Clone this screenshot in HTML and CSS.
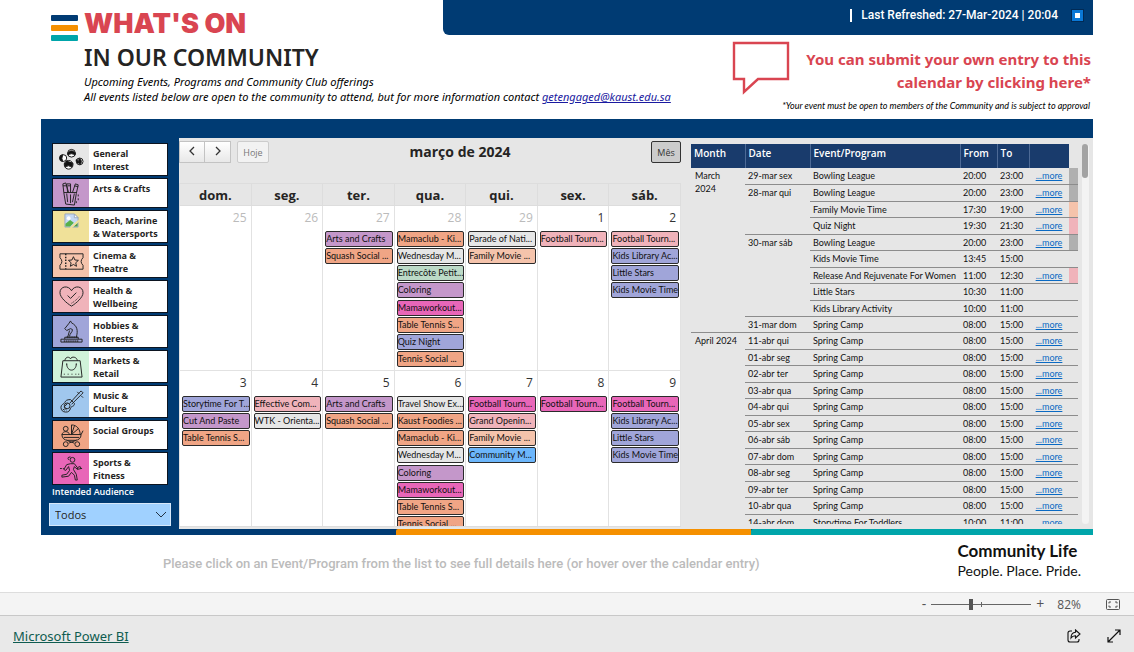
FILE: index.html
```html
<!DOCTYPE html>
<html lang="en">
<head>
<meta charset="utf-8">
<title>What's on in our community</title>
<link rel="stylesheet" href="styles.css">
</head>
<body>
<div class="report">
  <header>
    <div class="top-row">
      <div class="brand">
        <span class="stripes"><i class="navy"></i><i class="orange"></i><i class="teal"></i></span>
        <h1>WHAT'S ON</h1>
      </div>
      <div class="banner">
        <span class="refreshed">Last Refreshed: 27-Mar-2024 | 20:04</span>
        <button class="square" aria-label="Refresh status"></button>
      </div>
    </div>
    <div class="intro-row">
      <div class="intro">
        <h2>IN OUR COMMUNITY</h2>
        <p>Upcoming Events, Programs and Community Club offerings</p>
        <p>All events listed below are open to the community to attend, but for more information contact <a href="#">getengaged@kaust.edu.sa</a></p>
      </div>
      <div class="submit">
        <div class="submit-main">
          <svg class="bubble" viewBox="0 0 58 54" width="58" height="54"><path d="M2 2H56V38H26L12 51V38H2Z" fill="#fff" stroke="#d94551" stroke-width="2.4"/></svg>
          <a href="#">You can submit your own entry to this calendar by clicking here*</a>
        </div>
        <p>*Your event must be open to members of the Community and is subject to approval</p>
      </div>
    </div>
  </header>

  <main>
    <aside>
      <ul class="filters">
        <li><button><span class="ic gray"><svg viewBox="0 0 26 26"><g stroke="#111" fill="#fff"><circle cx="13" cy="6.500" r="4"/><circle cx="4.500" cy="11.500" r="3.500"/><circle cx="21.500" cy="15" r="3.500"/><circle cx="10" cy="18.500" r="4.500"/></g><path d="M9 6q4-4 8 0v2q-4-2-8 0zM4 8a3.500 3.500 0 0 0 0 7q-2-3 0-7zM21 12q4 2 1 6.500-3-2-1-6.500zM5.500 17q4-3 9 0l-1 4q-4-3-7 0z" fill="#111"/><path d="M18 13l2 4M7 15l6 2" stroke="#111" stroke-width="2"/></svg></span><b>General<br>Interest</b></button></li>
        <li class="one"><button><span class="ic purple"><svg viewBox="0 0 26 26"><path d="M5 12l2 12 9 1 2-12M5 12l-1-9 3-1 3 10M9 12l-1-9h4v9M14 12l3-9 3 1-2 9M5 12h13M8 13l1 9M12 14v9M16 13l-2 9M4 5h4M9 5h3M16 5l4 1M20 14v2M20 18v2M18 21v2"/></svg></span><b>Arts &amp; Crafts</b></button></li>
        <li><button><span class="ic yellow broken"><svg viewBox="0 0 16 16"><path d="M1 1h10l4 4v10H1z" fill="#c5d9f5" stroke="#9aa9bd"/><path d="M11 1v4h4z" fill="#fff" stroke="#9aa9bd"/><circle cx="5" cy="5.500" r="2" fill="#fff" stroke="none"/><path d="M1.500 14.500v-3l5-4 4 3-4 4z" fill="#57b04a" stroke="none"/><path d="M10 14.500l4.500-4v4z" fill="#4d9b42" stroke="none"/><path d="M7 16l9-8" stroke="#f0e199" stroke-width="2"/></svg></span><b>Beach, Marine<br>&amp; Watersports</b></button></li>
        <li><button><span class="ic peach"><svg viewBox="0 0 26 26"><path d="M1 5h24v4q-4 4 0 8v4H1v-4q4-4 0-8z"/><path d="M7 5v16" stroke-dasharray="1.500 1.500" stroke-width="1.500"/><path d="M15 8l1.500 3.400 3.700.4-2.800 2.500.8 3.700-3.200-1.900-3.200 1.900.8-3.700-2.800-2.500 3.700-.4z"/></svg></span><b>Cinema &amp;<br>Theatre</b></button></li>
        <li><button><span class="ic pink"><svg viewBox="0 0 26 26"><path d="M13 23C8 20 1 14 1 9c0-7 9-8 12-2 3-6 12-5 12 2 0 5-7 11-12 14z"/><path d="M9 12l3 3 6-6"/><path d="M13 20q5-3 8-7" stroke-dasharray="1 1"/></svg></span><b>Health &amp;<br>Wellbeing</b></button></li>
        <li><button><span class="ic violet"><svg viewBox="0 0 26 26"><path d="M2 21h22v3H2zM6 21v-2h14v2M9 19l2-7M18 19c2-7 1-12-5-15l-1-2-2 3-4 5 2 2 4-2 2 1c0 3-3 4-3 7"/><path d="M5 23h16M8 19h11" stroke-width="2" stroke-dasharray="1 1"/></svg></span><b>Hobbies &amp;<br>Interests</b></button></li>
        <li><button><span class="ic mint"><svg viewBox="0 0 26 26"><path d="M4 7h18l2 17H2zM8 11v-1M18 11v-1M8 10c0 9 10 9 10 0M6 7c1-5 5-4 6-2 1-3 7-2 7 2M5 21h1M9 21h1M13 21h1M17 21h1M20 21h1"/></svg></span><b>Markets &amp;<br>Retail</b></button></li>
        <li><button><span class="ic sky"><svg viewBox="0 0 26 26"><path d="M12 11c-4 0-5 1-6 3s-4 2-4 5 2 5 5 5 4-1 5-4 4-1 4-5z"/><circle cx="8.500" cy="17.500" r="3"/><path d="M11 15L21 4M13 16L23 6M21 4l2-2 2 2-2 2M5 19l3 3M4 21l2 1M19 3l2 2M23 7l2 2M6 18l3-3"/></svg></span><b>Music &amp;<br>Culture</b></button></li>
        <li class="one"><button><span class="ic salmon"><svg viewBox="0 0 26 26"><path d="M3 12h20c0 4-3 6-6 6H9c-3 0-6-2-6-6zM13 12V2c6 0 9 5 9 10M13 12l3-9M13 12l7-6M23 12l2-4"/><circle cx="7" cy="6" r="2.500"/><path d="M3 12c1-4 7-4 8 0M8 18l8 3M18 18l-8 3M5 15h16"/><circle cx="7" cy="22" r="2.500"/><circle cx="19" cy="22" r="2.500"/></svg></span><b>Social Groups</b></button></li>
        <li><button><span class="ic magenta"><svg viewBox="0 0 26 26"><circle cx="14" cy="4" r="2.500"/><path d="M10 4q-2-3 2-3M12 8l-4 1-3 5 2 1 3-4 1 4-3 4-5 1v2l7-1 3-4 3 3 1 5h2l-1-6-3-5 1-3 3 3 4-1-1-2-3 1-3-4z"/><path d="M1 13h4M18 13h3M22 13h3" stroke-dasharray="2 1"/></svg></span><b>Sports &amp;<br>Fitness</b></button></li>
      </ul>
      <label for="aud">Intended Audience</label>
      <div class="select-wrap">
        <select id="aud"><option>Todos</option></select>
        <svg viewBox="0 0 12 8" width="12" height="8"><path d="M1 1l5 5 5-5" fill="none" stroke="#234" stroke-width="1"/></svg>
      </div>
    </aside>

    <div class="content">
      <section class="calendar">
        <div class="toolbar">
          <div class="nav">
            <button aria-label="Previous"><svg viewBox="0 0 8 10" width="8" height="10"><path d="M6 1L2 5l4 4"/></svg></button><button aria-label="Next"><svg viewBox="0 0 8 10" width="8" height="10"><path d="M2 1l4 4-4 4"/></svg></button>
          </div>
          <button class="today" disabled>Hoje</button>
          <h3>março de 2024</h3>
          <button class="month">Mês</button>
        </div>
        <div class="month-clip">
        <table class="cal">
          <thead><tr><th>dom.</th><th>seg.</th><th>ter.</th><th>qua.</th><th>qui.</th><th>sex.</th><th>sáb.</th></tr></thead>
          <tbody>
            <tr>
              <td class="off"><time>25</time></td>
              <td class="off"><time>26</time></td>
              <td class="off"><time>27</time><div class="ev purple">Arts and Crafts</div><div class="ev salmon">Squash Social ...</div></td>
              <td class="off"><time>28</time><div class="ev salmon">Mamaclub - Ki...</div><div class="ev gray">Wednesday M...</div><div class="ev green">Entrecôte Petit...</div><div class="ev purple">Coloring</div><div class="ev magenta">Mamaworkout...</div><div class="ev salmon">Table Tennis S...</div><div class="ev violet">Quiz Night</div><div class="ev salmon">Tennis Social ...</div></td>
              <td class="off"><time>29</time><div class="ev gray">Parade of Nati...</div><div class="ev peach">Family Movie ...</div></td>
              <td><time>1</time><div class="ev pink">Football Tourn...</div></td>
              <td><time>2</time><div class="ev pink">Football Tourn...</div><div class="ev violet">Kids Library Ac...</div><div class="ev violet">Little Stars</div><div class="ev violet">Kids Movie Time</div></td>
            </tr>
            <tr>
              <td><time>3</time><div class="ev violet">Storytime For T...</div><div class="ev purple">Cut And Paste</div><div class="ev salmon">Table Tennis S...</div></td>
              <td><time>4</time><div class="ev pink">Effective Com...</div><div class="ev gray">WTK - Orienta...</div></td>
              <td><time>5</time><div class="ev purple">Arts and Crafts</div><div class="ev salmon">Squash Social ...</div></td>
              <td><time>6</time><div class="ev gray">Travel Show Ex...</div><div class="ev salmon">Kaust Foodies ...</div><div class="ev salmon">Mamaclub - Ki...</div><div class="ev gray">Wednesday M...</div><div class="ev purple">Coloring</div><div class="ev magenta">Mamaworkout...</div><div class="ev salmon">Table Tennis S...</div><div class="ev salmon">Tennis Social ...</div></td>
              <td><time>7</time><div class="ev magenta">Football Tourn...</div><div class="ev pink">Grand Openin...</div><div class="ev peach">Family Movie ...</div><div class="ev blue">Community M...</div></td>
              <td><time>8</time><div class="ev magenta">Football Tourn...</div></td>
              <td><time>9</time><div class="ev magenta">Football Tourn...</div><div class="ev violet">Kids Library Ac...</div><div class="ev violet">Little Stars</div><div class="ev violet">Kids Movie Time</div></td>
            </tr>
          </tbody>
        </table>
        </div>
      </section>

      <section class="list">
        <div class="list-clip">
        <table class="events">
          <colgroup><col class="c-month"><col class="c-date"><col><col class="c-from"><col class="c-to"><col class="c-more"><col class="c-tag"></colgroup>
          <thead><tr><th>Month</th><th>Date</th><th>Event/Program</th><th>From</th><th>To</th><th></th><td></td></tr></thead>
          <tbody class="march">
            <tr><td rowspan="10" class="m">March 2024</td><td>29-mar sex</td><td>Bowling League</td><td>20:00</td><td>23:00</td><td><a href="#">...more</a></td><td class="t-gray"></td></tr>
            <tr><td rowspan="3">28-mar qui</td><td>Bowling League</td><td>20:00</td><td>23:00</td><td><a href="#">...more</a></td><td class="t-gray"></td></tr>
            <tr><td>Family Movie Time</td><td>17:30</td><td>19:00</td><td><a href="#">...more</a></td><td class="peach"></td></tr>
            <tr><td>Quiz Night</td><td>19:30</td><td>21:30</td><td><a href="#">...more</a></td><td class="pink"></td></tr>
            <tr><td rowspan="5">30-mar sáb</td><td>Bowling League</td><td>20:00</td><td>23:00</td><td><a href="#">...more</a></td><td class="t-gray"></td></tr>
            <tr><td>Kids Movie Time</td><td>13:45</td><td>15:00</td><td></td><td></td></tr>
            <tr><td>Release And Rejuvenate For Women</td><td>11:00</td><td>12:30</td><td><a href="#">...more</a></td><td class="pink"></td></tr>
            <tr><td>Little Stars</td><td>10:30</td><td>11:00</td><td></td><td></td></tr>
            <tr><td>Kids Library Activity</td><td>10:00</td><td>11:00</td><td></td><td></td></tr>
            <tr><td>31-mar dom</td><td>Spring Camp</td><td>08:00</td><td>15:00</td><td><a href="#">...more</a></td><td></td></tr>
          </tbody>
          <tbody class="april">
            <tr><td rowspan="12" class="m">April 2024</td><td>11-abr qui</td><td>Spring Camp</td><td>08:00</td><td>15:00</td><td><a href="#">...more</a></td><td></td></tr>
            <tr><td>01-abr seg</td><td>Spring Camp</td><td>08:00</td><td>15:00</td><td><a href="#">...more</a></td><td></td></tr>
            <tr><td>02-abr ter</td><td>Spring Camp</td><td>08:00</td><td>15:00</td><td><a href="#">...more</a></td><td></td></tr>
            <tr><td>03-abr qua</td><td>Spring Camp</td><td>08:00</td><td>15:00</td><td><a href="#">...more</a></td><td></td></tr>
            <tr><td>04-abr qui</td><td>Spring Camp</td><td>08:00</td><td>15:00</td><td><a href="#">...more</a></td><td></td></tr>
            <tr><td>05-abr sex</td><td>Spring Camp</td><td>08:00</td><td>15:00</td><td><a href="#">...more</a></td><td></td></tr>
            <tr><td>06-abr sáb</td><td>Spring Camp</td><td>08:00</td><td>15:00</td><td><a href="#">...more</a></td><td></td></tr>
            <tr><td>07-abr dom</td><td>Spring Camp</td><td>08:00</td><td>15:00</td><td><a href="#">...more</a></td><td></td></tr>
            <tr><td>08-abr seg</td><td>Spring Camp</td><td>08:00</td><td>15:00</td><td><a href="#">...more</a></td><td></td></tr>
            <tr><td>09-abr ter</td><td>Spring Camp</td><td>08:00</td><td>15:00</td><td><a href="#">...more</a></td><td></td></tr>
            <tr><td>10-abr qua</td><td>Spring Camp</td><td>08:00</td><td>15:00</td><td><a href="#">...more</a></td><td></td></tr>
            <tr><td>14-abr dom</td><td>Storytime For Toddlers</td><td>10:00</td><td>11:00</td><td><a href="#">...more</a></td><td></td></tr>
          </tbody>
        </table>
        </div>
        <div class="scroll"><span></span></div>
      </section>
    </div>
    <div class="rule"><i class="navy"></i><i class="orange"></i><i class="teal"></i></div>
  </main>

  <div class="below">
    <p>Please click on an Event/Program from the list to see full details here (or hover over the calendar entry)</p>
    <div class="life"><strong>Community Life</strong><span>People. Place. Pride.</span></div>
  </div>
</div>

<div class="zoombar">
  <button aria-label="Zoom out">-</button>
  <input type="range" min="0" max="100" value="39" aria-label="Zoom">
  <button aria-label="Zoom in">+</button>
  <span>82%</span>
  <button class="fit" aria-label="Fit to page"><svg viewBox="0 0 14 11" width="14" height="11" fill="none" stroke="#555"><rect x=".5" y=".5" width="13" height="10" rx="1"/><path d="M5 3H3v1.500M9 3h2v1.500M5 8H3V6.500M9 8h2V6.500"/></svg></button>
</div>
<footer>
  <a href="#">Microsoft Power BI</a>
  <button aria-label="Share"><svg viewBox="0 0 14 14" width="14" height="14" fill="none" stroke="#111" stroke-width="1.100"><path d="M5 2H3a2 2 0 0 0-2 2v7a2 2 0 0 0 2 2h7a2 2 0 0 0 2-2v-1"/><path d="M8.500 1L13 5 8.500 9V6.700C6.500 6.600 5 7.500 4 9c0-3 1.500-5.500 4.500-5.700z"/></svg></button>
  <button aria-label="Full screen"><svg viewBox="0 0 14 14" width="14" height="14" fill="none" stroke="#111" stroke-width="1.200"><path d="M8 1h5v5M13 1L1 13M1 8v5h5"/></svg></button>
</footer>
</body>
</html>
```
FILE: styles.css
```css
* { box-sizing: border-box; }
body {
  margin: 0;
  min-height: 100vh;
  display: flex;
  flex-direction: column;
  background: #fff;
  color: #252423;
  font-family: "Open Sans", "Noto Sans", sans-serif;
  font-size: 9px;
}
h1, h2, h3, p, ul { margin: 0; padding: 0; }
button { font: inherit; color: inherit; padding: 0; border: 0; background: none; }
i { display: block; }
.navy { background: #003b73; }
.orange { background: #f59000; }
.teal { background: #00a5aa; }
.gray { background: #e6e6e6; }
.purple { background: #c497ca; }
.yellow { background: #f0e199; }
.peach { background: #f5c3ab; }
.pink { background: #f0b3ba; }
.violet { background: #a0a5d9; }
.mint { background: #d0f2d9; }
.sky { background: #a0c7ee; }
.salmon { background: #f0a585; }
.magenta { background: #e866b8; }
.green { background: #bcdac7; }
.blue { background: #6cb6fb; }
.t-gray { background: #b0b0b0; }

.report { padding: 0 41px; flex: 1; }

header { height: 119px; }
.top-row { display: flex; height: 41px; }
.brand { display: flex; width: 402px; padding-left: 10px; gap: 6px; }
.stripes { display: flex; flex-direction: column; gap: 4px; width: 27px; padding-top: 15px; }
.stripes i { height: 6px; border-radius: 1px; }
h1 {
  padding-top: 8px;
  font: 900 27px/32px Inter, sans-serif;
  color: #d94551;
}
.banner {
  flex: 1;
  height: 35px;
  display: flex;
  justify-content: flex-end;
  align-items: center;
  gap: 14px;
  padding: 0 10px 5px 0;
  border-radius: 0 0 0 6px;
  background: #003b73;
}
.refreshed {
  padding-left: 9px;
  border-left: 2px solid #fff;
  color: #fff;
  font: 500 12px/13px Roboto, sans-serif;
}
.square { width: 11px; height: 11px; border: 3px solid #0a78d6; background: #fff; outline: 1px solid #012a55; }
.intro-row { display: flex; justify-content: space-between; }
.intro { padding-left: 43px; white-space: nowrap; }
h2 { font: 600 23px/33px "Noto Sans", sans-serif; }
.intro p { font: italic 11px/15px "Noto Sans", sans-serif; color: #000; }
.intro a { color: #1a1aa0; }
.submit { text-align: right; }
.submit-main { display: flex; justify-content: flex-end; gap: 2px; }
.submit-main a {
  width: 301px;
  padding: 7px 2px 0 0;
  color: #d94551;
  font: 700 15px/23px "Noto Sans", sans-serif;
  text-decoration: none;
}
.submit p { padding: 4px 3px 0 0; font: italic 9px/14px Lato, sans-serif; color: #000; }

main {
  display: grid;
  grid-template-columns: 138px minmax(0, 1fr);
  grid-template-rows: auto 6px;
  padding-top: 19px;
  background: #003b73;
}
aside { grid-row: 1 / 3; padding: 6px 8px 9px; }
.filters { list-style: none; display: flex; flex-direction: column; gap: 4px; margin: 0 4px; }
.filters li { outline: 1px solid #0c1420; }
.filters button {
  display: flex;
  width: 100%;
  height: 31px;
  background: #fff;
  text-align: left;
}
.filters .one button { height: 28px; }
.ic { width: 36px; height: 100%; flex: none; display: grid; place-items: center; }
.ic svg { width: 25px; height: 25px; fill: none; stroke: #222; stroke-width: 1; }
.broken { align-items: start; padding-top: 2px; }
.ic.broken svg { width: 15px; height: 15px; }
.filters b { padding: 3px 0 0 4px; font-size: 9px; line-height: 13px; font-weight: 700; white-space: nowrap; }
aside label { display: block; padding: 2px 0 0 3px; line-height: 12px; font-weight: 600; color: #fff; }
.select-wrap { display: grid; margin-top: 5px; align-items: center; }
.select-wrap > * { grid-area: 1 / 1; }
.select-wrap svg { justify-self: end; margin-right: 4px; pointer-events: none; }
select {
  appearance: none;
  width: 100%;
  height: 23px;
  padding: 0 5px;
  border: 1px solid #d6e8fa;
  border-radius: 0;
  background: #a0d1ff;
  color: #252423;
  font: 11px "Open Sans", sans-serif;
}

.content {
  display: grid;
  grid-template-columns: minmax(0, 502fr) minmax(0, 408fr);
  align-content: start;
  padding-right: 4px;
  background: #e6e6e6;
}
.toolbar { display: flex; align-items: flex-start; height: 45px; padding-top: 3px; }
.nav { display: flex; }
.nav button { width: 26px; height: 22px; border: 1px solid #c3c3c3; background: linear-gradient(#fff, #e8e8e8); }
.nav button + button { border-left: 0; }
.nav svg { fill: none; stroke: #333; stroke-width: 1.300; }
.today, .month { height: 22px; border: 1px solid #ccc; border-radius: 2px; }
.today { width: 32px; margin-left: 6px; background: #f2f2f2; color: #777; }
.month { width: 30px; border-color: #333; background: #ccc; color: #333; }
h3 { flex: 1; text-align: center; font-size: 14px; line-height: 22px; font-weight: 700; }
.month-clip { height: 344px; overflow: hidden; border-bottom: 1px solid #ddd; }
.cal { width: 100%; border-collapse: collapse; table-layout: fixed; background: #fff; }
.cal th { height: 22px; padding: 0; border: 1px solid #ddd; background: #e6e6e6; font-size: 13px; line-height: 20px; }
.cal td { height: 165px; padding: 0 1px 0 2px; vertical-align: top; border: 1px solid #e2e2e2; }
.cal time { display: block; height: 25px; padding-right: 3px; text-align: right; font-size: 12px; line-height: 24px; color: #333; }
.cal .off time { color: #bbb; }
.ev {
  height: 16px;
  margin-bottom: 1px;
  border: 1px solid #2b2b2b;
  border-radius: 2px;
  font: 9px/14px Lato, sans-serif;
  color: #111;
  white-space: nowrap;
  overflow: hidden;
}
.ev:nth-of-type(4n) { margin-bottom: 2px; }

.list { display: flex; gap: 4px; padding: 6px 0 5px 10px; }
.list-clip { flex: 1; height: 380px; overflow: hidden; }
.events { width: 100%; border-collapse: collapse; table-layout: fixed; white-space: nowrap; }
.c-month { width: 54px; }
.c-date { width: 65px; }
.c-from { width: 37px; }
.c-to { width: 32px; }
.c-more { width: 40px; }
.c-tag { width: 9px; }
.events th {
  height: 24px;
  padding: 0 3px 6px;
  border-right: 1px solid #4d6a96;
  background: #193b6c;
  color: #fff;
  text-align: left;
  font-size: 10px;
  font-weight: 600;
}
.events th:nth-child(6) { border-right: 0; }
.events tbody td {
  height: 16px;
  padding: 0 3px;
  border-bottom: 1px solid #8c8c8c;
  font: 9px/15px Lato, sans-serif;
  vertical-align: top;
  color: #111;
}
.events thead td { border: 0; }
.events .march tr:nth-child(even):not(:last-child) td:last-child,
.events .april tr:nth-child(odd) td:last-child { height: 17px; }
.events tbody .m { padding: 1px 10px 0 4px; line-height: 13px; white-space: normal; }
.events .april .m { padding-right: 0; }
.events tbody td:nth-last-child(2) { padding: 0; text-align: center; }
.events a { color: #0a6ac4; }
.scroll { width: 7px; height: 380px; border-radius: 4px; background: #f3f3f3; }
.scroll span { display: block; width: 6px; height: 34px; border-radius: 3px; background: #a3a3a3; }
.rule { display: grid; grid-template-columns: 217fr 355fr 342fr; }
.rule i + i { border-radius: 2px 0 0 0; }

.below { display: flex; justify-content: space-between; padding: 6px 12px 0 122px; }
.below p { padding-top: 14px; color: #bbb; font: 500 13px/18px Roboto, sans-serif; }
.life { display: flex; flex-direction: column; color: #111; font-family: Lato, sans-serif; }
.life strong { font-size: 17px; line-height: 20px; }
.life span { font-size: 14px; line-height: 20px; }

.zoombar {
  display: flex;
  justify-content: flex-end;
  align-items: center;
  height: 24px;
  padding-right: 14px;
  border-top: 1px solid #ddd;
  border-bottom: 1px solid #c8c8c8;
  background: #f4f4f4;
  color: #555;
  font-size: 12px;
}
.zoombar button { line-height: 20px; font-size: 14px; }
.zoombar span { margin: 0 25px 0 13px; }
.fit { display: flex; }
input[type="range"] {
  appearance: none;
  width: 100px;
  height: 12px;
  margin: 0 5px;
  background: linear-gradient(#666, #666) 50% 50% / 1px 5px no-repeat, linear-gradient(#666, #666) 50% 50% / 100% 1px no-repeat;
}
input[type="range"]::-webkit-slider-thumb { appearance: none; width: 4px; height: 11px; background: #555; }
footer {
  display: flex;
  align-items: center;
  gap: 26px;
  height: 36px;
  padding: 4px 13px 0;
  background: #e9e9e9;
}
footer a { margin-right: auto; color: #0f5c50; font: 13px "Noto Sans", sans-serif; }
footer button { display: flex; }
```
